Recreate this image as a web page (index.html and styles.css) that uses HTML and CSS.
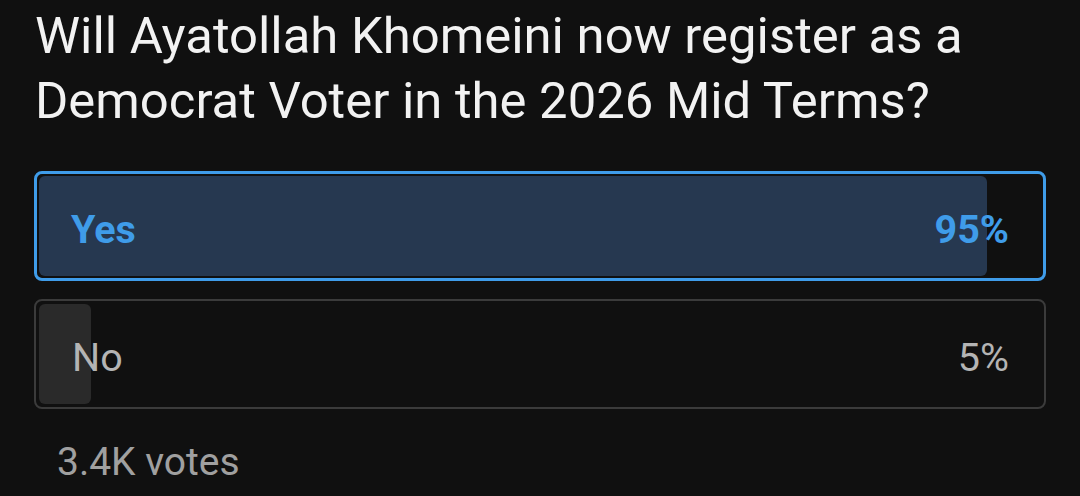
FILE: index.html
```html
<!DOCTYPE html>
<html lang="en">
<head>
<meta charset="utf-8">
<title>Poll</title>
<link rel="stylesheet" href="styles.css">
</head>
<body>
<main class="poll">
  <h1 class="poll-title">Will Ayatollah Khomeini now register as a Democrat Voter in the 2026 Mid Terms?</h1>
  <div class="options">
    <div class="option option-selected">
      <div class="option-fill" style="width: 94.2%"></div>
      <span class="option-label">Yes</span>
      <span class="option-pct">95%</span>
    </div>
    <div class="option">
      <div class="option-fill" style="width: 5.2%"></div>
      <span class="option-label">No</span>
      <span class="option-pct">5%</span>
    </div>
  </div>
  <div class="votes">3.4K votes</div>
</main>
</body>
</html>
```

FILE: styles.css
```css
html, body {
  margin: 0;
  padding: 0;
  background: #101010;
}

body {
  width: 1080px;
  height: 496px;
  overflow: hidden;
  font-family: Roboto, "Noto Sans", "Liberation Sans", sans-serif;
}

.poll {
  padding: 0 34px 0 34px;
}

.poll-title {
  margin: 0;
  padding: 3px 0 0 1px;
  font-size: 50.8px;
  line-height: 65px;
  font-weight: 400;
  color: #f2f2f2;
  width: 1000px;
}

.options {
  display: flex;
  flex-direction: column;
  gap: 18px;
  margin-top: 38px;
}

.option {
  position: relative;
  height: 110px;
  box-sizing: border-box;
  border: 2px solid #3b3b3b;
  border-radius: 8px;
  padding: 6px 3px 0 3px;
  display: flex;
  align-items: center;
  justify-content: space-between;
}

.option-selected {
  border: 3px solid #3f9ce9;
  padding: 6px 2px 0 2px;
}

.option-fill {
  position: absolute;
  left: 3px;
  top: 3px;
  bottom: 3px;
  max-width: calc(100% - 6px);
  background: #2a2a2a;
  border-radius: 6px;
}

.option-selected .option-fill {
  left: 2px;
  top: 2px;
  bottom: 2px;
  background: #263850;
}

.option-label,
.option-pct {
  position: relative;
  font-size: 39.5px;
  color: #b4b4b4;
}

.option-label {
  margin-left: 33px;
}

.option-pct {
  margin-right: 32px;
}

.option-selected .option-label,
.option-selected .option-pct {
  color: #3f9ce9;
  font-weight: 700;
}

.option-selected .option-label {
  margin-left: 32px;
}

.option-selected .option-pct {
  margin-right: 32px;
}

.votes {
  margin: 30px 0 0 23px;
  font-size: 39px;
  color: #a0a0a0;
}
```
